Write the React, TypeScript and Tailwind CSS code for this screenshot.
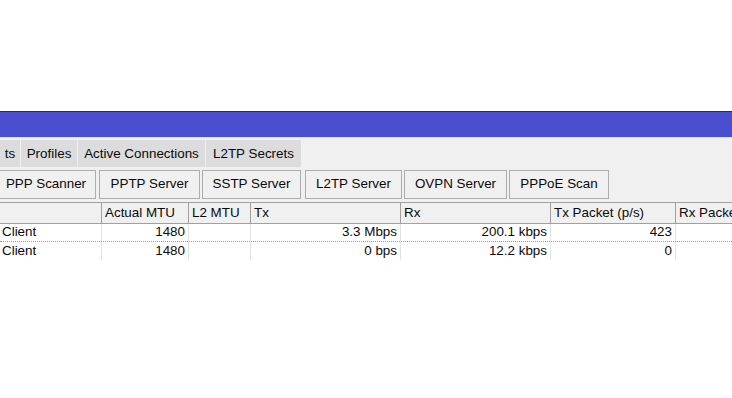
import React from 'react';

const tabs = [
  { label: 'ts', w: 'w-[20px]' },
  { label: 'Profiles', w: 'w-[56px]' },
  { label: 'Active Connections', w: 'w-[127px]' },
  { label: 'L2TP Secrets', w: 'w-[95px]' },
];

const buttons = [
  { label: 'PPP Scanner', cls: 'ml-[-4px] w-[100px]' },
  { label: 'PPTP Server', cls: 'ml-[3px] w-[101px]' },
  { label: 'SSTP Server', cls: 'ml-[2px] w-[99px]' },
  { label: 'L2TP Server', cls: 'ml-[4px] w-[97px]' },
  { label: 'OVPN Server', cls: 'ml-[2px] w-[103px]' },
  { label: 'PPPoE Scan', cls: 'ml-[2px] w-[100px]' },
];

const cols = [
  { label: '', w: 'w-[101px]', right: false },
  { label: 'Actual MTU', w: 'w-[87px]', right: true },
  { label: 'L2 MTU', w: 'w-[62px]', right: true },
  { label: 'Tx', w: 'w-[150px]', right: true },
  { label: 'Rx', w: 'w-[150px]', right: true },
  { label: 'Tx Packet (p/s)', w: 'w-[125px]', right: true },
  { label: 'Rx Packet (p/s)', w: 'w-[125px]', right: true },
];

const rows = [
  ['Client', '1480', '', '3.3 Mbps', '200.1 kbps', '423', ''],
  ['Client', '1480', '', '0 bps', '12.2 kbps', '0', ''],
];

export default function App() {
  return (
    <div className="w-[732px] h-[398px] overflow-hidden bg-white text-[13.4px] text-[#0a0a0a]" style={{ fontFamily: '"Liberation Sans", Arial, sans-serif' }}>
      <div className="h-[111px]" />

      {/* Window title bar */}
      <div className="h-[26px] border-t border-[#2a2a5a] bg-[#4b4fcf]" />
      <div className="h-px bg-[#dcdcf0]" />

      <div className="bg-[#f0f0f0] pt-[2px]">
        {/* Tabs */}
        <div className="flex h-[27px] gap-px">
          {tabs.map(t => (
            <div key={t.label} className={`${t.w} flex items-center justify-center pt-px whitespace-nowrap overflow-hidden bg-[#dcdcdc]`}>
              {t.label}
            </div>
          ))}
        </div>

        {/* Toolbar buttons */}
        <div className="flex pt-[3px] pb-[3px] overflow-hidden">
          {buttons.map(b => (
            <div key={b.label} className={`${b.cls} h-[29px] shrink-0 flex items-center justify-center border border-[#adadad] bg-[#f0f0f0]`}>
              {b.label}
            </div>
          ))}
        </div>
      </div>

      {/* Table */}
      <div className="flex h-[22px] border-t border-b border-[#a0a0a0] bg-[#f0f0f0] overflow-hidden">
        {cols.map((c, i) => (
          <div key={i} className={`${c.w} shrink-0 flex items-center pl-[3px] whitespace-nowrap overflow-hidden ${i > 0 ? 'border-l border-[#a0a0a0]' : ''}`}>
            {c.label}
          </div>
        ))}
      </div>
      {rows.map((r, ri) => (
        <div key={ri} className={`flex h-[18px] overflow-hidden ${ri === 0 ? 'border-b border-dotted border-[#9a9a9a]' : ''}`}>
          {r.map((cell, i) => (
            <div
              key={i}
              className={`${cols[i].w} shrink-0 flex items-center whitespace-nowrap overflow-hidden ${cols[i].right ? 'justify-end pr-[3px]' : 'pl-[2px]'} ${i > 0 ? 'border-l border-[#e3e3e3]' : ''}`}
            >
              {cell}
            </div>
          ))}
        </div>
      ))}
    </div>
  );
}
